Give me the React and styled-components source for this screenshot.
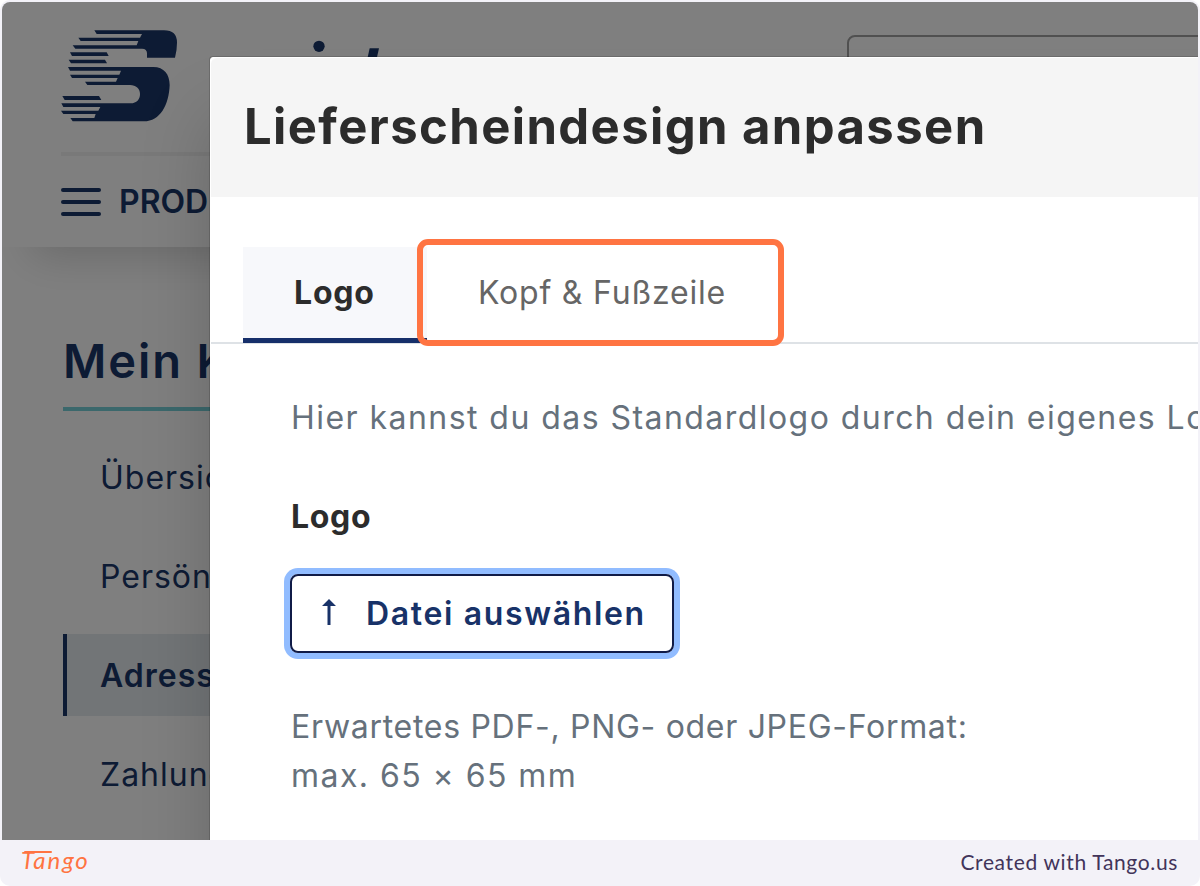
import React from 'react';
import styled, {createGlobalStyle} from 'styled-components';

const navy = '#1a3668';
const grey = '#66717c';

const GlobalStyle = createGlobalStyle`
  * {
    box-sizing: border-box;
  }

  body {
    margin: 0;
    background: #fff;
    font-family: Inter, "Liberation Sans", sans-serif;
  }
`;

const Card = styled.div`
  width: 1200px;
  height: 886px;
  padding: 2px 2px 0;
  border-radius: 10px;
  background: #f3f2f8;
  overflow: hidden;
`;

const Screen = styled.div`
  position: relative;
  height: 838px;
  border-radius: 8px 8px 0 0;
  background: #fff;
  overflow: hidden;
`;

const Header = styled.header`
  height: 245px;
  padding: 26px 0 0 58px;
  box-shadow: 30px 8px 40px rgba(0, 0, 0, 0.18);
`;

const BrandRow = styled.div`
  display: flex;
  align-items: flex-start;
  height: 128px;
  border-bottom: 4px solid #f2f2f2;
  margin-left: 1px;
`;

const Brand = styled.svg`
  display: block;
  flex: none;
  width: 340px;
  height: 95px;
  margin-left: -1px;
  fill: ${navy};
`;

const Search = styled.div`
  width: 500px;
  height: 80px;
  flex: none;
  margin: 7px 0 0 447px;
  border: 2px solid #a0a0a0;
  border-radius: 8px;
`;

const MenuButton = styled.div`
  display: flex;
  align-items: center;
  gap: 18px;
  height: 91px;
  margin-left: 1px;
  color: ${navy};
  font-size: 32px;
  font-weight: 600;
`;

const Bars = styled.div`
  display: grid;
  gap: 8px;

  span {
    width: 40px;
    height: 4px;
    border-radius: 2px;
    background: ${navy};
  }
`;

const Sidebar = styled.aside`
  width: 500px;
  padding: 78px 0 0 61px;
`;

const SidebarTitle = styled.h2`
  height: 86px;
  margin: 0 0 25px;
  border-bottom: 4px solid #76d0d8;
  color: ${navy};
  font-size: 47px;
  font-weight: 600;
  line-height: 72px;
  letter-spacing: 1.9px;
`;

const SidebarItem = styled.div`
  height: 82px;
  margin-bottom: 17px;
  padding-left: 33px;
  border-left: 4px solid ${({active}) => (active ? navy : 'transparent')};
  background: ${({active}) => (active ? '#e5eaef' : 'transparent')};
  color: ${navy};
  font-size: 32px;
  font-weight: ${({active}) => (active ? 600 : 400)};
  line-height: 83px;
  letter-spacing: 1px;
`;

const Backdrop = styled.div`
  position: absolute;
  inset: 0;
  padding: 55px 0 0 208px;
  background: rgba(0, 0, 0, 0.5);
`;

const Modal = styled.section`
  width: 1100px;
  height: 900px;
  border: 1px solid #fff;
  border-radius: 3px;
  background: #fff;
  box-shadow: 0 0 0 1px rgba(0, 0, 0, 0.15), 0 60px 70px rgba(0, 0, 0, 0.18);
  white-space: nowrap;
`;

const ModalHeader = styled.div`
  height: 139px;
  padding-left: 33px;
  border-radius: 6px 0 0 0;
  background: #f5f5f5;
`;

const ModalTitle = styled.h1`
  margin: 0;
  color: #2c2c2c;
  font-size: 49px;
  font-weight: 700;
  line-height: 137px;
  letter-spacing: 1.4px;
`;

const Tabs = styled.div`
  display: flex;
  height: 147px;
  padding: 50px 0 0 32px;
  border-bottom: 2px solid #dee2e6;
`;

const Tab = styled.div`
  position: relative;
  width: 184px;
  height: 96px;
  padding-left: 51px;
  border-bottom: ${({active}) => (active ? `5px solid #162f6a` : '0')};
  background: ${({active}) => (active ? '#f7f8fb' : 'transparent')};
  color: ${({active}) => (active ? '#2c2c2c' : '#666')};
  font-size: 32px;
  font-weight: ${({active}) => (active ? 700 : 400)};
  line-height: 91px;
  letter-spacing: 0.8px;
`;

const Highlight = styled.div`
  position: absolute;
  top: -8px;
  left: -10px;
  width: 367px;
  height: 107px;
  border: 6px solid #ff7442;
  border-radius: 11px;
`;

const ModalBody = styled.div`
  padding: 49px 0 0 80px;
  color: ${grey};
  font-size: 32px;
  line-height: 49px;
`;

const Text = styled.p`
  margin: 0;
  letter-spacing: ${({spacing}) => spacing || '1.45px'};
`;

const Label = styled.div`
  margin: 50px 0 33px;
  color: #2c2c2c;
  font-weight: 700;
  letter-spacing: 0.7px;
`;

const FileButton = styled.div`
  display: flex;
  align-items: center;
  width: 384px;
  height: 79px;
  margin: 0 0 49px -1px;
  padding-left: 30px;
  border: 2px solid #101b47;
  border-radius: 8px;
  box-shadow: 0 0 0 6px #91bcff;
  color: #183268;
  font-weight: 600;
  letter-spacing: 1.65px;

  svg {
    width: 14px;
    height: 26px;
    margin: -3px 30px 0 0;
    fill: currentColor;
  }
`;

const Footer = styled.footer`
  display: flex;
  align-items: center;
  justify-content: space-between;
  height: 46px;
  padding: 0 20px 3px 19px;
  color: #42345a;
  font-family: Lato, sans-serif;
  font-size: 21px;
  letter-spacing: 0.65px;
`;

const TangoLogo = styled.span`
  position: relative;
  margin-top: -5px;
  color: #ff7442;
  font-size: 24px;
  font-style: italic;
  letter-spacing: 1.9px;

  /* long stroke over the T */
  &::before {
    content: '';
    position: absolute;
    top: 6px;
    left: 3px;
    width: 28px;
    height: 2px;
    border-radius: 1px;
    background: currentColor;
  }
`;

const items = [
  {label: 'Übersicht'},
  {label: 'Persönlich'},
  {label: 'Adressen', active: true},
  {label: 'Zahlung'},
];

const BrandLogo = () => (
  <Brand viewBox="60 54 1020 285">
    <path d="M163 61H372Q411 61 411 98Q411 120 405 143H321V130Q321 116 306 116H106L98 106H290L295 93H122L115 83H300L306 72H170Z"/>
    <path d="M90 127H200L206 138H96Z"/>
    <path d="M86 149H195L201 160H93Z"/>
    <path d="M84 171H340C372 171 389 193 389 225C387 285 360 334 312 334H98L91 324H163L167 312H70L63 302H175L181 291H70L64 280H272C290 280 300 268 300 252C300 236 288 225 270 225H142L135 215H228L233 204H96L90 194H238L243 182H90Z"/>
    <path d="M67 258H177L184 270H74Z"/>
    <circle cx="837" cy="109" r="17"/>
    <path d="M989 115H1017L1007 160H979Z"/>
  </Brand>
);

const App = () => (
  <>
    <GlobalStyle/>
    <Card>
      <Screen>
        <Header>
          <BrandRow>
            <BrandLogo/>
            <Search/>
          </BrandRow>
          <MenuButton>
            <Bars><span/><span/><span/></Bars>
            PRODUKTE
          </MenuButton>
        </Header>
        <Sidebar>
          <SidebarTitle>Mein Konto</SidebarTitle>
          {items.map(({label, active}) => (
            <SidebarItem key={label} active={active}>{label}</SidebarItem>
          ))}
        </Sidebar>
        <Backdrop>
          <Modal>
            <ModalHeader>
              <ModalTitle>Lieferscheindesign anpassen</ModalTitle>
            </ModalHeader>
            <Tabs>
              <Tab active>Logo</Tab>
              <Tab>
                Kopf &amp; Fußzeile
                <Highlight/>
              </Tab>
            </Tabs>
            <ModalBody>
              <Text>Hier kannst du das Standardlogo durch dein eigenes Logo ersetzen.</Text>
              <Label>Logo</Label>
              <FileButton>
                <svg viewBox="0 0 14 26"><path d="M7 0L14 7H8.5V26H5.5V7H0Z"/></svg>
                Datei auswählen
              </FileButton>
              <Text spacing="0.7px">Erwartetes PDF-, PNG- oder JPEG-Format:</Text>
              <Text>max. 65 × 65 mm</Text>
            </ModalBody>
          </Modal>
        </Backdrop>
      </Screen>
      <Footer>
        <TangoLogo>Tango</TangoLogo>
        <span>Created with Tango.us</span>
      </Footer>
    </Card>
  </>
);

export default App;
